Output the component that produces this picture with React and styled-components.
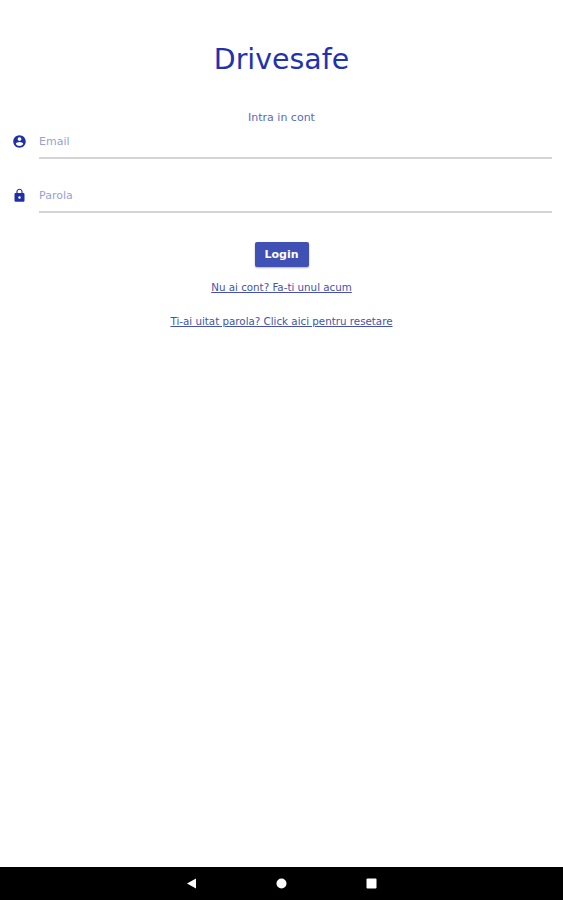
import styled, { createGlobalStyle } from 'styled-components';

const GlobalStyle = createGlobalStyle`
  html, body {
    margin: 0;
    padding: 0;
    background: #fff;
  }
  * { box-sizing: border-box; }
`

const Screen = styled.div`
  display: flex;
  flex-direction: column;
  height: 900px;
  font-family: 'DejaVu Sans', sans-serif;
  overflow: hidden;
`

const Content = styled.main`
  flex: 1;
  display: flex;
  flex-direction: column;
  align-items: center;
  padding-top: 41px;
`

const Title = styled.h1`
  margin: 0;
  font-size: 28.4px;
  line-height: 38px;
  font-weight: 400;
  color: #1f33b0;
`

const Subtitle = styled.div`
  margin-top: 32px;
  font-size: 11px;
  line-height: 14px;
  color: #5c69bd;
`

const Form = styled.form`
  align-self: stretch;
  display: flex;
  flex-direction: column;
  gap: 20px;
  padding: 0 11px 0 12px;
`

const Field = styled.label`
  display: flex;
  align-items: center;
  gap: 12px;
  height: 34px;
`

const FieldIcon = styled.svg`
  width: 15px;
  height: 15px;
  margin-bottom: 2px;
  flex: none;
  fill: #1f2fa8;
`

const Input = styled.input`
  flex: 1;
  min-width: 0;
  height: 34px;
  padding: 0;
  border: 0;
  border-bottom: 2px solid #d4d4d4;
  outline: 0;
  background: transparent;
  font-family: inherit;
  font-size: 11px;
  color: #8c94cc;

  &::placeholder {
    color: #9aa0d3;
    opacity: 1;
  }
`

const LoginButton = styled.button`
  margin-top: 29px;
  width: 54px;
  height: 25px;
  padding: 0;
  border: 0;
  border-radius: 2px;
  background: #3f51b5;
  box-shadow: 0 1px 2px rgba(0, 0, 0, 0.3);
  color: #fff;
  font-family: inherit;
  font-size: 11px;
  font-weight: 700;
`

const TextLink = styled.a`
  margin-top: ${props => props.$gap}px;
  font-size: 10.3px;
  line-height: 14px;
  color: #4552ad;
  text-decoration: underline;
`

const NavBar = styled.nav`
  flex: none;
  height: 33px;
  display: flex;
  align-items: center;
  justify-content: center;
  gap: 79px;
  background: #000;
`

const NavIcon = styled.svg`
  width: 11px;
  height: 11px;
  fill: #fff;
`

const App = () => {
  return (
    <Screen>
      <GlobalStyle />
      <Content>
        <Title>Drivesafe</Title>
        <Subtitle>Intra in cont</Subtitle>
        <Form onSubmit={e => e.preventDefault()}>
          <Field>
            <FieldIcon viewBox="0 0 24 24">
              <path d="M12 2C6.48 2 2 6.48 2 12s4.48 10 10 10 10-4.48 10-10S17.52 2 12 2zm0 3c1.66 0 3 1.34 3 3s-1.34 3-3 3-3-1.34-3-3 1.34-3 3-3zm0 14.2c-2.5 0-4.71-1.28-6-3.22.03-1.99 4-3.08 6-3.08 1.99 0 5.97 1.09 6 3.08-1.29 1.94-3.5 3.22-6 3.22z" />
            </FieldIcon>
            <Input type="email" placeholder="Email" />
          </Field>
          <Field>
            <FieldIcon viewBox="0 0 24 24">
              <path d="M18 8h-1V6c0-2.76-2.24-5-5-5S7 3.24 7 6v2H6c-1.1 0-2 .9-2 2v10c0 1.1.9 2 2 2h12c1.1 0 2-.9 2-2V10c0-1.1-.9-2-2-2zm-6 9c-1.1 0-2-.9-2-2s.9-2 2-2 2 .9 2 2-.9 2-2 2zm3.1-9H8.9V6c0-1.71 1.39-3.1 3.1-3.1 1.71 0 3.1 1.39 3.1 3.1v2z" />
            </FieldIcon>
            <Input type="password" placeholder="Parola" />
          </Field>
        </Form>
        <LoginButton type="button">Login</LoginButton>
        <TextLink href="#" $gap={13}>Nu ai cont? Fa-ti unul acum</TextLink>
        <TextLink href="#" $gap={20}>Ti-ai uitat parola? Click aici pentru resetare</TextLink>
      </Content>
      <NavBar>
        <NavIcon viewBox="0 0 11 11">
          <path d="M10 0.5V10.5L1 5.5Z" />
        </NavIcon>
        <NavIcon viewBox="0 0 11 11">
          <circle cx="5.5" cy="5.5" r="5" />
        </NavIcon>
        <NavIcon viewBox="0 0 11 11">
          <rect x="0.5" y="0.5" width="10" height="10" rx="1" />
        </NavIcon>
      </NavBar>
    </Screen>
  )
}

export default App;
